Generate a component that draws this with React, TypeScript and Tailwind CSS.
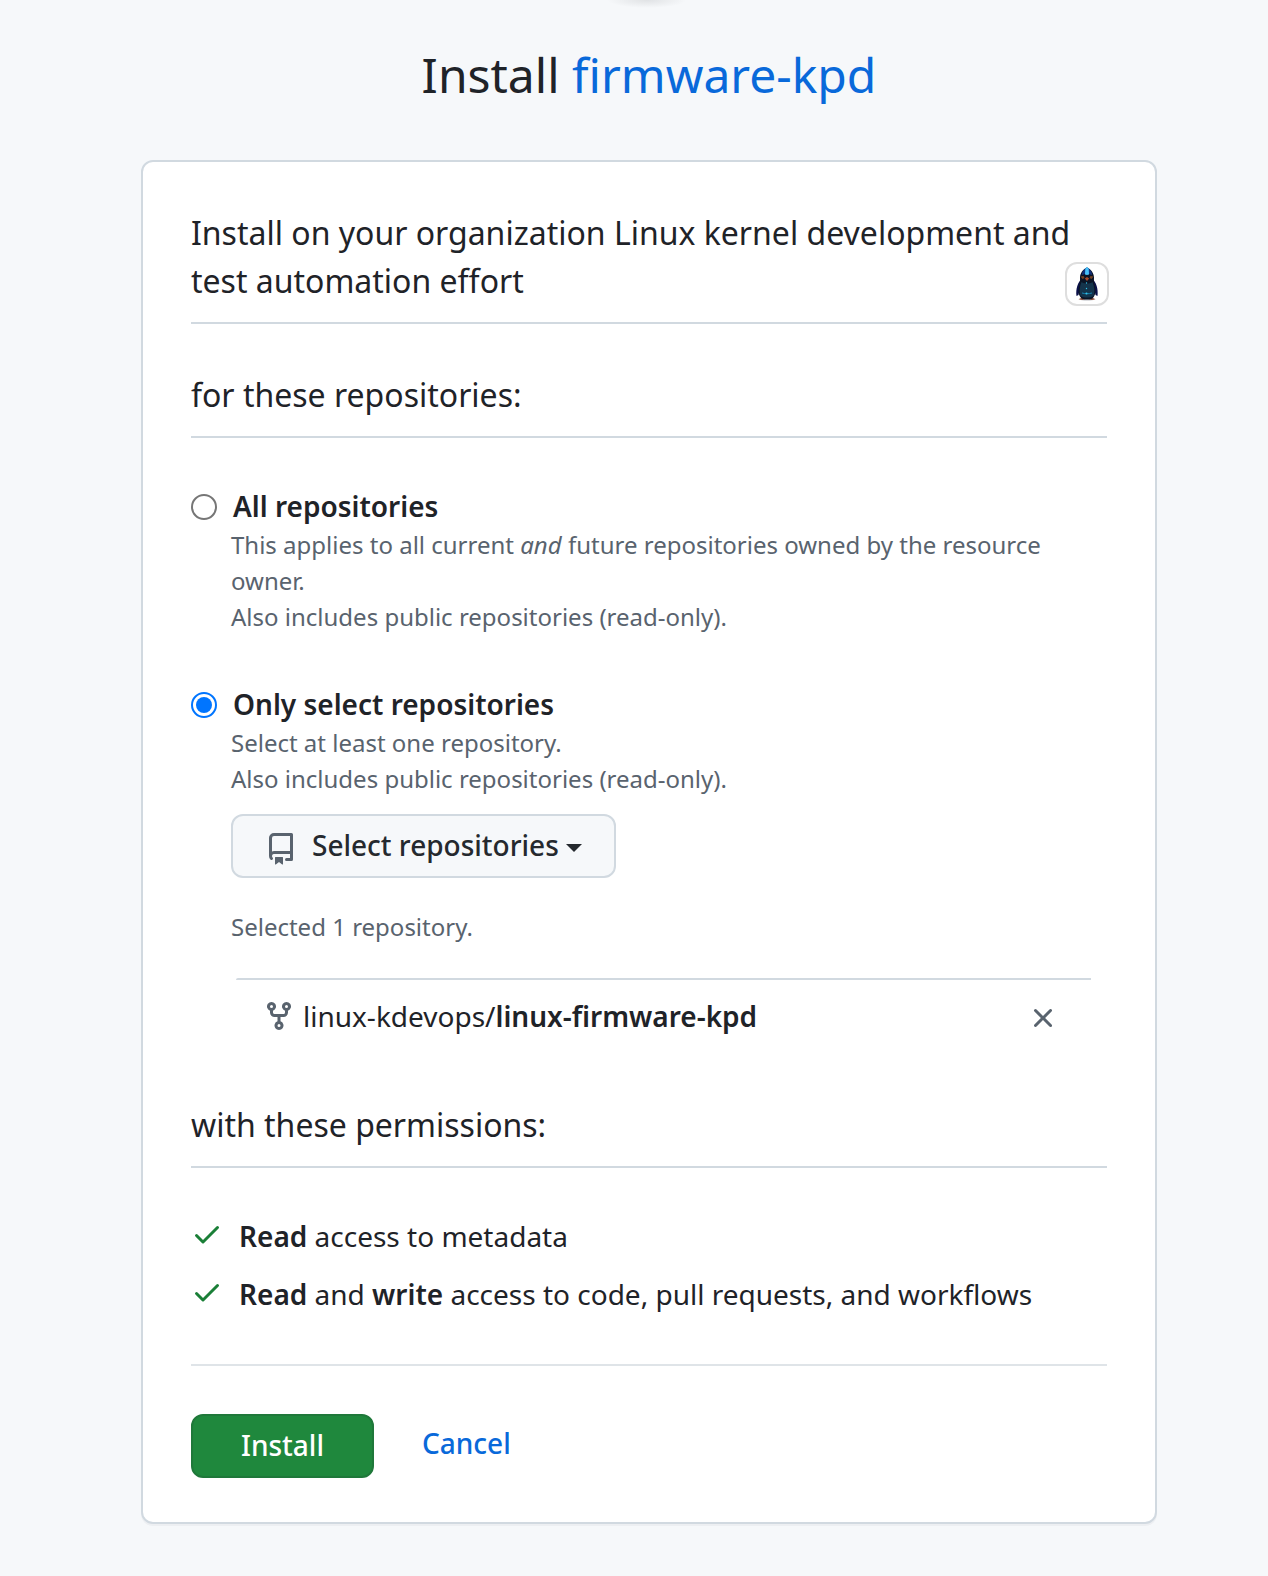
import React from "react";

const Icon = ({ d, size, className }: { d: string; size: number; className?: string }) => (
  <svg width={size} height={size} viewBox="0 0 16 16" fill="currentColor" className={className}>
    <path d={d} />
  </svg>
);

const REPO =
  "M2 2.5A2.5 2.5 0 0 1 4.5 0h8.75a.75.75 0 0 1 .75.75v12.5a.75.75 0 0 1-.75.75h-2.5a.75.75 0 0 1 0-1.5h1.75v-2h-8a1 1 0 0 0-.714 1.7.75.75 0 1 1-1.072 1.05A2.495 2.495 0 0 1 2 11.5Zm10.5-1h-8a1 1 0 0 0-1 1v6.708A2.486 2.486 0 0 1 4.5 9h8ZM5 12.25a.25.25 0 0 1 .25-.25h3.5a.25.25 0 0 1 .25.25v3.25a.25.25 0 0 1-.4.2l-1.45-1.087a.249.249 0 0 0-.3 0L5.4 15.7a.25.25 0 0 1-.4-.2Z";
const FORK =
  "M5 5.372v.878c0 .414.336.75.75.75h4.5a.75.75 0 0 0 .75-.75v-.878a2.25 2.25 0 1 1 1.5 0v.878a2.25 2.25 0 0 1-2.25 2.25h-1.5v2.128a2.251 2.251 0 1 1-1.5 0V8.5h-1.5A2.25 2.25 0 0 1 3.5 6.25v-.878a2.25 2.25 0 1 1 1.5 0ZM5 3.25a.75.75 0 1 0-1.5 0 .75.75 0 0 0 1.5 0Zm6.75.75a.75.75 0 1 0 0-1.5.75.75 0 0 0 0 1.5Zm-3 8.75a.75.75 0 1 0-1.5 0 .75.75 0 0 0 1.5 0Z";
const X =
  "M3.72 3.72a.75.75 0 0 1 1.06 0L8 6.94l3.22-3.22a.749.749 0 0 1 1.275.326.749.749 0 0 1-.215.734L9.06 8l3.22 3.22a.749.749 0 0 1-.326 1.275.749.749 0 0 1-.734-.215L8 9.06l-3.22 3.22a.751.751 0 0 1-1.042-.018.751.751 0 0 1-.018-1.042L6.94 8 3.72 4.78a.75.75 0 0 1 0-1.06Z";
const CHECK =
  "M13.78 4.22a.75.75 0 0 1 0 1.06l-7.25 7.25a.75.75 0 0 1-1.06 0L2.22 9.28a.751.751 0 0 1 .018-1.042.751.751 0 0 1 1.042-.018L6 10.94l6.72-6.72a.75.75 0 0 1 1.06 0Z";

const Penguin = () => (
  <svg width="40" height="40" viewBox="0 0 40 40" className="mt-px shrink-0">
    <ellipse cx="20" cy="34.4" rx="7" ry="1.2" fill="#b9bcc2" />
    <path d="M11.5 34.2l4-2 3 1.800-3 1zM28.500 34.200l-4-2-3 1.800 3 1z" fill="#8a4a35" />
    <path d="M14.500 14c-3.500 3-6 10-5 17l2-1 2-9zM25.500 14c3.500 3 6 10 5 17l-2-1-2-9z" fill="#0a1048" />
    <path d="M20 2.500c-4 1.500-7 6-7 10 0 2 .3 4-.5 7-1 4-1.500 9 .5 12 1 2.500 4 3 7 3s6-.5 7-3c2-3 1.500-8 .5-12-.8-3-.5-5-.5-7 0-4-3-8.500-7-10z" fill="#0b1426" />
    <path d="M14.500 17c3 2 8 2 11 0 2 5 2.500 10 1 14-4 2-9 2-13 0-1.500-4-1-9 1-14z" fill="#14344c" />
    <path d="M15 10c0-4 2.500-6.500 5-7.500 2.500 1 5 3.500 5 7.500l-3-1h-4z" fill="#12307a" />
    <path d="M18 9.500l.3-6L20 2l1.700 1.500.3 6-2 .5z" fill="#45c0fa" />
    <path d="M13.500 11.500l3-.5 1 2-2 1zM26.500 11.500l-3-.5-1 2 2 1z" fill="#754324" />
    <path d="M17.800 13.500L20 12l2.200 1.500L20 16z" fill="#a94a2b" />
    <path d="M15 28c3 1 7 1 10 0" stroke="#1685b4" fill="none" />
    <circle cx="19.500" cy="18" r=".7" fill="#35c4ea" />
    <circle cx="19.500" cy="23.500" r=".7" fill="#35c4ea" />
    <circle cx="19.500" cy="28.500" r="1" fill="#35c4ea" />
  </svg>
);

const Radio = ({ checked }: { checked?: boolean }) => (
  <span
    className={
      checked
        ? "mt-px flex size-[26px] items-center justify-center rounded-full border-2 border-[#0075ff] bg-white"
        : "mt-px flex size-[26px] rounded-full border-2 border-[#767676] bg-white"
    }
  >
    {checked && <span className="size-4 rounded-full bg-[#0075ff]" />}
  </span>
);

const Heading = ({ children }: { children: React.ReactNode }) => (
  <h2 className="border-b-2 border-[#d1d9e0] pb-[17px] text-[32px] leading-[48px]">{children}</h2>
);

const Permission = ({ children }: { children: React.ReactNode }) => (
  <li className="flex gap-4">
    <Icon d={CHECK} size={32} className="mt-[3px] text-[#1a7f37]" />
    <span>{children}</span>
  </li>
);

export default function App() {
  return (
    <div className="h-[1576px] overflow-hidden bg-[#f6f8fa] pr-[111px] pl-[141px] font-['Noto_Sans',sans-serif] text-[28px] leading-[42px] text-[#1f2328]">
      <div className="mx-auto h-2 w-20 -translate-x-0.5 bg-[radial-gradient(ellipse_at_top,rgba(31,35,40,0.1),transparent_70%)]" />
      <h1 className="pt-[31px] text-center text-[48px] leading-[72px]">
        Install <a className="text-[#0969da]">firmware-kpd</a>
      </h1>

      <main className="mt-[49px] h-[1364px] rounded-xl border-2 border-[#d1d9e0] bg-white px-12 pt-[47px] shadow-[0_2px_0_rgba(31,35,40,0.04)]">
        <Heading>
          <span className="flex items-end">
            <span className="w-[890px] shrink-0">
              Install on your organization Linux kernel development and test automation effort
            </span>
            <span className="-mb-px -ml-4 flex size-11 shrink-0 items-center justify-center rounded-xl border-2 border-[#dedede] bg-white">
              <Penguin />
            </span>
          </span>
        </Heading>

        <div className="mt-[47px]">
          <Heading>for these repositories:</Heading>
        </div>

        <section className="mt-[47px]">
          <label className="flex items-center gap-4 font-semibold">
            <Radio />
            All repositories
          </label>
          <p className="pl-10 text-2xl leading-9 text-[#59636e]">
            This applies to all current <em>and</em> future repositories owned by the resource owner.
            <br />
            Also includes public repositories (read-only).
          </p>
        </section>

        <section className="mt-12">
          <label className="flex items-center gap-4 font-semibold">
            <Radio checked />
            Only select repositories
          </label>
          <div className="pl-10">
            <p className="text-2xl leading-9 text-[#59636e]">
              Select at least one repository.
              <br />
              Also includes public repositories (read-only).
            </p>
            <button className="mt-[17px] flex h-16 w-[385px] items-center rounded-xl border-2 border-[#d1d9e0] bg-[#f6f8fa] pl-8 font-medium text-[#25292e]">
              <Icon d={REPO} size={32} className="mt-1.5 text-[#59636e]" />
              <span className="-mt-0.5 ml-[15px]">Select repositories</span>
              <span className="mt-1 ml-[7px] border-x-8 border-t-8 border-x-transparent border-t-current" />
            </button>
            <p className="mt-[31px] text-2xl leading-9 text-[#59636e]">Selected 1 repository.</p>
            <div className="mt-[33px] mr-4 h-[76px]">
              <div className="ml-[5px] h-0.5 rounded-tl-full bg-[#d1d9e0]" />
              <div className="flex h-[74px] items-center px-8">
                <Icon d={FORK} size={32} className="-mt-0.5 text-[#59636e]" />
                <span className="-mt-0.5 ml-2">
                  linux-kdevops/<strong className="font-semibold">linux-firmware-kpd</strong>
                </span>
                <Icon d={X} size={32} className="mt-0.5 ml-auto text-[#59636e]" />
              </div>
            </div>
          </div>
        </section>

        <div className="mt-[47px]">
          <Heading>with these permissions:</Heading>
        </div>

        <ul className="mt-[47px] flex flex-col gap-4">
          <Permission>
            <b className="font-semibold">Read</b> access to metadata
          </Permission>
          <Permission>
            <b className="font-semibold">Read</b> and <b className="font-semibold">write</b> access to code, pull
            requests, and workflows
          </Permission>
        </ul>

        <div className="mt-[49px] flex items-start border-t-2 border-[#dfe4e8] pt-12">
          <button className="h-16 w-[183px] rounded-xl border-2 border-[#1f783a] bg-[#1f883d] pb-0.5 font-medium text-white">
            Install
          </button>
          <a className="mt-2 ml-12 font-medium text-[#0969da]">Cancel</a>
        </div>
      </main>
    </div>
  );
}
